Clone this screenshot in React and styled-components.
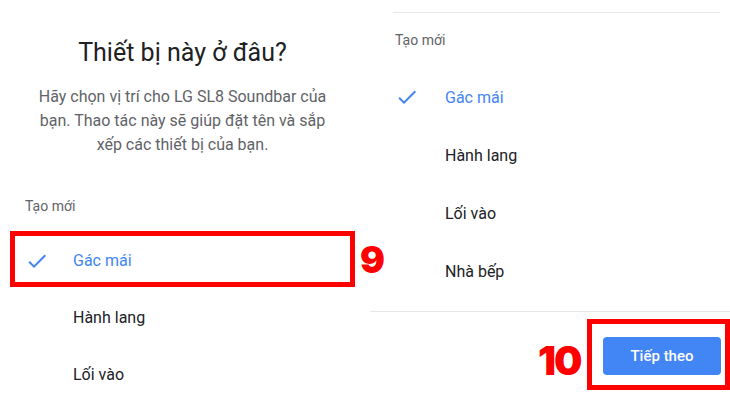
import styled, { createGlobalStyle } from "styled-components";

const GlobalStyle = createGlobalStyle`
  html, body {
    margin: 0;
    padding: 0;
    background: #ffffff;
  }
  body {
    font-family: Roboto, "Noto Sans", "Liberation Sans", sans-serif;
    color: #202124;
  }
`;

const LEFT_ITEMS = ["Gác mái", "Hành lang", "Lối vào"];
const RIGHT_ITEMS = ["Gác mái", "Hành lang", "Lối vào", "Nhà bếp"];

function CheckIcon() {
  return (
    <svg width="24" height="24" viewBox="0 0 24 24" fill="#4285f4">
      <path d="M9 16.17L4.83 12l-1.42 1.41L9 19 21 7l-1.41-1.41z" />
    </svg>
  );
}

function LocationList({ items, selected, annotate, wide }) {
  return (
    <List $wide={wide}>
      {items.map((item) => (
        <Row key={item} $wide={wide}>
          <IconSlot $wide={wide}>{item === selected && <CheckIcon />}</IconSlot>
          <RowLabel $active={item === selected}>{item}</RowLabel>
          {annotate && item === selected && (
            <>
              <RowHighlight />
              <Marker $left={360} $top={9}>9</Marker>
            </>
          )}
        </Row>
      ))}
    </List>
  );
}

export default function App() {
  return (
    <>
      <GlobalStyle />
      <Page>
        <LeftPanel>
          <Title>Thiết bị này ở đâu?</Title>
          <Description>
            Hãy chọn vị trí cho LG SL8 Soundbar của bạn. Thao tác này sẽ giúp
            đặt tên và sắp xếp các thiết bị của bạn.
          </Description>
          <Divider $left={24} $right={24} $top={23} />
          <SectionLabel $pad={25} $top={16}>Tạo mới</SectionLabel>
          <LocationList items={LEFT_ITEMS} selected="Gác mái" annotate />
        </LeftPanel>

        <RightPanel>
          <Divider $left={28} $right={10} $top={12} />
          <SectionLabel $pad={30} $top={17}>Tạo mới</SectionLabel>
          <LocationList items={RIGHT_ITEMS} selected="Gác mái" wide />
          <Divider $left={5} $right={0} $top={11} />
          <Footer>
            <NextButton>
              Tiếp theo
              <ButtonHighlight />
              <Marker $left={-65} $top={4} $size={40}>10</Marker>
            </NextButton>
          </Footer>
        </RightPanel>
      </Page>
    </>
  );
}

const Page = styled.main`
  display: flex;
  width: 730px;
  height: 400px;
  overflow: hidden;
`;

const LeftPanel = styled.section`
  width: 365px;
  flex: none;
  display: flex;
  flex-direction: column;
  padding-top: 37px;
  position: relative;
  z-index: 1;
`;

const RightPanel = styled.section`
  width: 365px;
  flex: none;
  display: flex;
  flex-direction: column;
`;

const Title = styled.h1`
  margin: 0;
  font-size: 25px;
  line-height: 32px;
  font-weight: 400;
  text-align: center;
  color: #202124;
`;

const Description = styled.p`
  margin: 16px 0 0;
  padding: 0 32px;
  font-size: 16px;
  line-height: 24px;
  text-align: center;
  color: #5f6368;
`;

const Divider = styled.hr`
  border: none;
  height: 1px;
  background: #e6e6e6;
  margin: ${({ $top }) => $top}px ${({ $right }) => $right}px 0
    ${({ $left }) => $left}px;
`;

const SectionLabel = styled.div`
  margin-top: ${({ $top }) => $top}px;
  padding-left: ${({ $pad }) => $pad}px;
  font-size: 14px;
  line-height: 20px;
  color: #5f6368;
`;

const List = styled.div`
  display: flex;
  flex-direction: column;
  padding-top: ${({ $wide }) => ($wide ? 18 : 16)}px;
`;

const Row = styled.div`
  position: relative;
  display: flex;
  align-items: center;
  height: ${({ $wide }) => ($wide ? 58 : 57)}px;
  padding-left: ${({ $wide }) => ($wide ? 30 : 25)}px;
`;

const IconSlot = styled.span`
  display: flex;
  width: 24px;
  height: 24px;
  margin-right: ${({ $wide }) => ($wide ? 26 : 24)}px;
`;

const RowLabel = styled.span`
  font-size: 16px;
  color: ${({ $active }) => ($active ? "#4285f4" : "#202124")};
`;

const RowHighlight = styled.span`
  position: absolute;
  top: -1px;
  bottom: 2px;
  left: 10px;
  right: 10px;
  border: 5px solid #ff0000;
  pointer-events: none;
`;

const Marker = styled.span`
  position: absolute;
  left: ${({ $left }) => $left}px;
  top: ${({ $top }) => $top}px;
  font-family: Inter, "Liberation Sans", sans-serif;
  font-weight: 900;
  font-size: ${({ $size }) => $size || 37}px;
  line-height: 1;
  color: #ff0000;
  letter-spacing: -2px;
`;

const Footer = styled.div`
  display: flex;
  justify-content: flex-end;
  padding: 25px 9px 0 0;
`;

const NextButton = styled.button`
  position: relative;
  width: 118px;
  height: 38px;
  border: none;
  border-radius: 4px;
  background: #4285f4;
  color: #ffffff;
  font-family: Roboto, "Noto Sans", sans-serif;
  font-size: 15px;
  font-weight: 500;
`;

const ButtonHighlight = styled.span`
  position: absolute;
  top: -18px;
  bottom: -15px;
  left: -16px;
  right: -9px;
  border: 5px solid #ff0000;
`;
